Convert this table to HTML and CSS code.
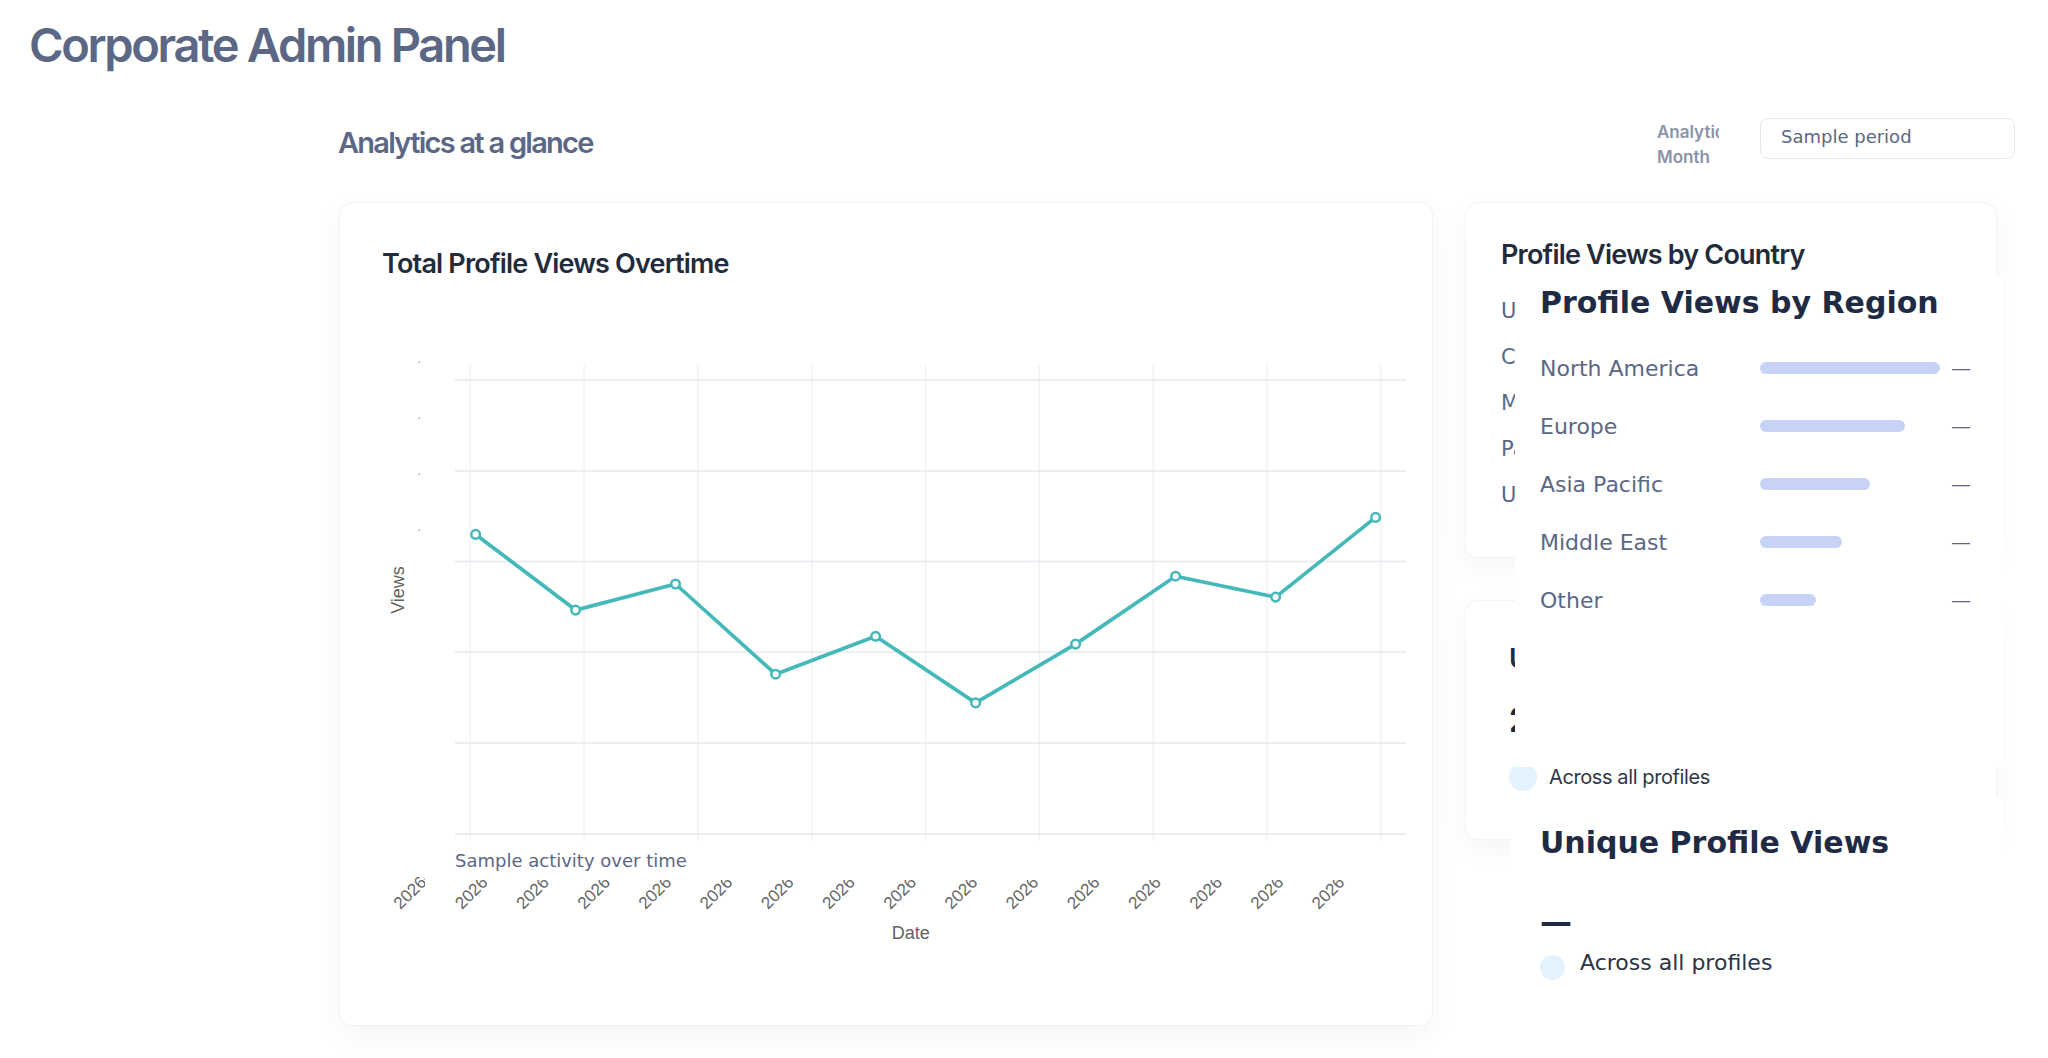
FILE: index.html
```html
<!DOCTYPE html>
<html lang="en">
<head>
<meta charset="utf-8">
<title>Corporate Admin Panel</title>
<link rel="stylesheet" href="styles.css">
</head>
<body>
<header class="topbar">
  <h1 class="app-title">Corporate Admin Panel</h1>
</header>
<main class="page">
  <div class="page-head">
    <h2 class="page-title">Analytics at a glance</h2>
    <div class="filter">
      <label class="filter-label">Analytics Month</label>
      <div class="select">Sample period</div>
    </div>
  </div>
  <div class="grid">
    <section class="card chart-card">
      <h3 class="card-title chart-title">Total Profile Views Overtime</h3>
      <svg class="chart" width="1092" height="725" viewBox="0 0 1092 725" xmlns="http://www.w3.org/2000/svg">
        <defs>
          <clipPath id="clipTicks"><rect x="90" y="580" width="1000" height="145"/></clipPath>
          <clipPath id="clipFirst"><rect x="0" y="573" width="85" height="152"/></clipPath>
        </defs>
        <g class="vgrid">
          <line x1="130.3" y1="65" x2="130.3" y2="541"/>
          <line x1="244.1" y1="65" x2="244.1" y2="541"/>
          <line x1="357.9" y1="65" x2="357.9" y2="541"/>
          <line x1="471.7" y1="65" x2="471.7" y2="541"/>
          <line x1="585.5" y1="65" x2="585.5" y2="541"/>
          <line x1="699.3" y1="65" x2="699.3" y2="541"/>
          <line x1="813.1" y1="65" x2="813.1" y2="541"/>
          <line x1="926.9" y1="65" x2="926.9" y2="541"/>
          <line x1="1040.7" y1="65" x2="1040.7" y2="541"/>
        </g>
        <g class="hgrid">
          <line x1="115" y1="80" x2="1066" y2="80"/>
          <line x1="115" y1="171" x2="1066" y2="171"/>
          <line x1="115" y1="261.5" x2="1066" y2="261.5"/>
          <line x1="115" y1="352" x2="1066" y2="352"/>
          <line x1="115" y1="443" x2="1066" y2="443"/>
          <line x1="115" y1="534" x2="1066" y2="534"/>
        </g>
        <g class="ytick-dots">
          <rect x="78.6" y="61.6" width="1.4" height="1.4"/>
          <rect x="78.6" y="117.6" width="1.4" height="1.4"/>
          <rect x="78.6" y="173.6" width="1.4" height="1.4"/>
          <rect x="78.6" y="229.6" width="1.4" height="1.4"/>
        </g>
        <polyline class="series" points="135.6,234.4 235.6,310.1 335.5,284.0 435.6,374.2 535.6,336.3 635.6,402.9 735.6,344.1 835.6,276.2 935.6,297.1 1035.6,217.4"/>
        <g class="markers">
          <circle cx="135.6" cy="234.4" r="4.3"/>
          <circle cx="235.6" cy="310.1" r="4.3"/>
          <circle cx="335.5" cy="284.0" r="4.3"/>
          <circle cx="435.6" cy="374.2" r="4.3"/>
          <circle cx="535.6" cy="336.3" r="4.3"/>
          <circle cx="635.6" cy="402.9" r="4.3"/>
          <circle cx="735.6" cy="344.1" r="4.3"/>
          <circle cx="835.6" cy="276.2" r="4.3"/>
          <circle cx="935.6" cy="297.1" r="4.3"/>
          <circle cx="1035.6" cy="217.4" r="4.3"/>
        </g>
        <text class="axis-title" x="57.7" y="290" transform="rotate(-90 57.7 290)">Views</text>
        <text class="axis-title" x="570.8" y="633">Date</text>
        <g class="xticks">
          <g clip-path="url(#clipFirst)">
            <text transform="translate(60.6 610) rotate(-45)">2026-01-01</text>
          </g>
          <g clip-path="url(#clipTicks)">
            <text transform="translate(122 610) rotate(-45)">2026-01-03</text>
            <text transform="translate(183.2 610) rotate(-45)">2026-01-05</text>
            <text transform="translate(244.4 610) rotate(-45)">2026-01-07</text>
            <text transform="translate(305.6 610) rotate(-45)">2026-01-09</text>
            <text transform="translate(366.8 610) rotate(-45)">2026-01-11</text>
            <text transform="translate(428 610) rotate(-45)">2026-01-13</text>
            <text transform="translate(489.2 610) rotate(-45)">2026-01-15</text>
            <text transform="translate(550.4 610) rotate(-45)">2026-01-17</text>
            <text transform="translate(611.6 610) rotate(-45)">2026-01-19</text>
            <text transform="translate(672.8 610) rotate(-45)">2026-01-21</text>
            <text transform="translate(734 610) rotate(-45)">2026-01-23</text>
            <text transform="translate(795.2 610) rotate(-45)">2026-01-25</text>
            <text transform="translate(856.4 610) rotate(-45)">2026-01-27</text>
            <text transform="translate(917.6 610) rotate(-45)">2026-01-29</text>
            <text transform="translate(978.8 610) rotate(-45)">2026-01-31</text>
          </g>
        </g>
      </svg>
      <p class="chart-caption">Sample activity over time</p>
    </section>
    <aside class="side">
      <section class="card country-card">
        <h3 class="card-title">Profile Views by Country</h3>
        <ul class="country-list">
          <li>United States</li>
          <li>Canada</li>
          <li>Mexico</li>
          <li>Pakistan</li>
          <li>United Kingdom</li>
        </ul>
      </section>
      <section class="card unique-card">
        <h3 class="card-title">Unique Profile Views</h3>
        <div class="big-number">2,847</div>
        <div class="note"><span class="dot"></span><span>Across all profiles</span></div>
      </section>
    </aside>
  </div>
</main>

<section class="panel region-panel">
  <h3 class="panel-title">Profile Views by Region</h3>
  <ul class="region-list">
    <li class="region-row"><span class="region-name">North America</span><span class="track"><span class="bar" style="width:180px"></span></span><span class="region-val">—</span></li>
    <li class="region-row"><span class="region-name">Europe</span><span class="track"><span class="bar" style="width:145px"></span></span><span class="region-val">—</span></li>
    <li class="region-row"><span class="region-name">Asia Pacific</span><span class="track"><span class="bar" style="width:110px"></span></span><span class="region-val">—</span></li>
    <li class="region-row"><span class="region-name">Middle East</span><span class="track"><span class="bar" style="width:82px"></span></span><span class="region-val">—</span></li>
    <li class="region-row"><span class="region-name">Other</span><span class="track"><span class="bar" style="width:56px"></span></span><span class="region-val">—</span></li>
  </ul>
</section>

<section class="panel unique-panel">
  <h3 class="panel-title">Unique Profile Views</h3>
  <div class="panel-value">—</div>
  <div class="panel-note"><span class="panel-dot"></span><span>Across all profiles</span></div>
</section>
</body>
</html>
```
FILE: styles.css
```css
* { box-sizing: border-box; }
html, body { margin: 0; padding: 0; }
body {
  position: relative;
  width: 2048px;
  height: 1058px;
  overflow: hidden;
  background: #ffffff;
  font-family: "Inter", "Noto Sans", sans-serif;
  color: #1f2937;
}
h1, h2, h3, p, ul { margin: 0; padding: 0; }
ul { list-style: none; }

.topbar { padding: 15px 0 0 29px; height: 74px; }
.app-title {
  font-size: 47px;
  line-height: 60px;
  font-weight: 600;
  letter-spacing: -0.05em;
  color: #5b6785;
}

.page { padding: 44px 33px 0 340px; }
.page-head {
  display: flex;
  justify-content: space-between;
  align-items: flex-start;
  height: 85px;
}
.page-title {
  margin: 5px 0 0 -2px;
  font-size: 29px;
  line-height: 40px;
  font-weight: 600;
  letter-spacing: -0.06em;
  color: #5b6785;
}
.filter { display: flex; align-items: flex-start; }
.filter-label {
  width: 62px;
  margin-top: 2px;
  margin-right: 41px;
  overflow: hidden;
  font-size: 17px;
  line-height: 25px;
  font-weight: 600;
  color: #8a94a8;
}
.select {
  width: 255px;
  height: 41px;
  padding-left: 20px;
  border: 1px solid #e3e7ed;
  border-radius: 8px;
  font-family: "DejaVu Sans", sans-serif;
  font-size: 18px;
  line-height: 36px;
  color: #5b6785;
}

.grid {
  display: grid;
  grid-template-columns: 1092px 530px;
  column-gap: 34px;
  align-items: start;
}
.card {
  position: relative;
  background: #ffffff;
  border-radius: 12px;
  box-shadow: 0 0 0 1px #f1f3f6, 0 10px 30px rgba(15, 23, 42, 0.045);
}
.card-title {
  font-size: 27px;
  line-height: 36px;
  font-weight: 600;
  letter-spacing: -0.03em;
  color: #222b3c;
}

.chart-card { height: 822px; }
.chart-title { padding: 42px 0 0 42px; line-height: 38px; height: 80px; }
.chart { display: block; margin-top: 17px; overflow: hidden; }
.vgrid line { stroke: #eef0f4; stroke-width: 1.2; }
.hgrid line { stroke: #e5e8ee; stroke-width: 1.3; }
.ytick-dots rect { fill: #9aa0a8; }
.series { fill: none; stroke: #45b8ba; stroke-width: 3.7; stroke-linejoin: round; }
.markers circle { fill: #ffffff; stroke: #45b8ba; stroke-width: 2.5; }
.axis-title {
  font-family: "Liberation Sans", Arial, sans-serif;
  font-size: 18px;
  fill: #616161;
  text-anchor: middle;
  dominant-baseline: central;
}
.xticks text {
  font-family: "Liberation Sans", Arial, sans-serif;
  font-size: 17px;
  fill: #666666;
}
.chart-caption {
  position: absolute;
  left: 115px;
  top: 641px;
  width: 960px;
  height: 34px;
  background: #ffffff;
  font-family: "DejaVu Sans", sans-serif;
  font-size: 18px;
  line-height: 34px;
  color: #5b6785;
}

.side { display: flex; flex-direction: column; row-gap: 44px; }
.country-card { height: 354px; padding: 34px 0 0 35px; }
.country-list { margin-top: 15px; }
.country-list li {
  font-family: "DejaVu Sans", sans-serif;
  font-size: 21px;
  line-height: 46px;
  color: #5b6785;
  white-space: nowrap;
}
.unique-card { height: 238px; padding: 40px 0 0 43px; }
.big-number {
  margin-top: 21px;
  font-size: 34px;
  line-height: 44px;
  font-weight: 700;
  color: #1f2937;
}
.note {
  margin-top: 21px;
  display: flex;
  align-items: center;
  column-gap: 12px;
  font-size: 20px;
  line-height: 28px;
  letter-spacing: -0.02em;
  color: #2d3748;
}
.dot { width: 28px; height: 28px; border-radius: 50%; background: #e4f2fd; flex: none; }

.panel {
  position: absolute;
  background: #ffffff;
  font-family: "DejaVu Sans", sans-serif;
}
.panel-title {
  font-size: 30px;
  line-height: 40px;
  font-weight: 700;
  color: #1f2b45;
  white-space: nowrap;
}
.region-panel { left: 1515px; top: 275px; width: 488px; height: 492px; padding: 8px 0 0 25px; }
.region-list { margin-top: 16px; }
.region-row {
  display: flex;
  align-items: center;
  height: 58px;
}
.region-name { width: 220px; font-size: 22px; color: #5b6785; }
.track { width: 180px; height: 12px; margin-right: 11px; }
.bar { display: block; height: 12px; border-radius: 6px; background: #c6d3f7; }
.region-val { font-size: 20px; color: #5b6785; }

.unique-panel { left: 1510px; top: 797px; width: 493px; height: 230px; padding: 26px 0 0 30px; }
.panel-value {
  margin-top: 39px;
  font-size: 32px;
  line-height: 40px;
  font-weight: 700;
  color: #1f2b45;
}
.panel-note {
  margin-top: 6px;
  display: flex;
  align-items: flex-start;
  column-gap: 15px;
  font-size: 22px;
  line-height: 30px;
  color: #2a3447;
}
.panel-dot { width: 25px; height: 25px; margin-top: 7px; border-radius: 50%; background: #e4f2fd; flex: none; }
```
